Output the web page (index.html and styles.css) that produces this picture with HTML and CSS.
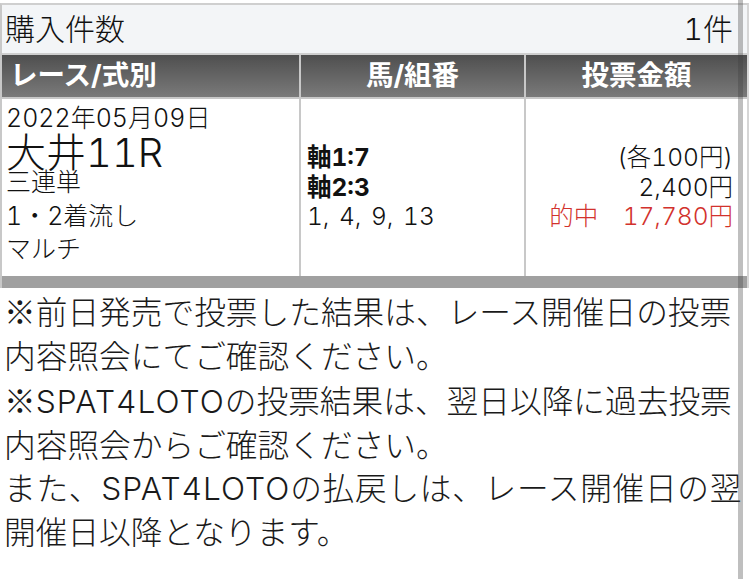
FILE: index.html
```html
<!DOCTYPE html>
<html lang="ja">
<head>
<meta charset="utf-8">
<link rel="stylesheet" href="styles.css">
</head>
<body>
<div class="summary">
  <div class="count-row">
    <span>購入件数</span>
    <span>1件</span>
  </div>
  <div class="grid">
    <div class="th th-left">レース/式別</div>
    <div class="th">馬/組番</div>
    <div class="th">投票金額</div>
    <div class="td race">
      <div class="date">2022年05月09日</div>
      <div class="name">大井11R</div>
      <div class="line first">三連単</div>
      <div class="line second">1・2着流し</div>
      <div class="line">マルチ</div>
    </div>
    <div class="td horses">
      <div class="b">軸1:7</div>
      <div class="b">軸2:3</div>
      <div class="nums">1, 4, 9, 13</div>
    </div>
    <div class="td amount">
      <div>(各100円)</div>
      <div>2,400円</div>
      <div class="hit">的中　17,780円</div>
    </div>
  </div>
  <div class="band"></div>
</div>
<div class="notes">
  <p><span class="kome">※</span>前日発売で投票した結果は、レース開催日の投票<br>内容照会にてご確認ください。</p>
  <p><span class="kome">※</span><span class="latin">SPAT4LOTO</span>の投票結果は、翌日以降に過去投票<br>内容照会からご確認ください。</p>
  <p><span class="spread">また、<span class="latin">SPAT4LOTO</span>の払戻しは、レース開催日の翌</span><br>開催日以降となります。</p>
</div>
<div class="scrollbar"></div>
</body>
</html>
```

FILE: styles.css
```css
html, body {
  margin: 0;
  padding: 0;
  background: #fff;
}
body {
  width: 750px;
  height: 579px;
  overflow: hidden;
  position: relative;
  font-family: "Inter", "Noto Sans CJK JP", sans-serif;
  font-weight: 300;
  font-variant-numeric: tabular-nums;
  color: #111;
}
.summary {
  margin-top: 3px;
  width: 745px;
  border-top: 2px solid #cfcfcf;
  border-left: 2px solid #c8c8c8;
  border-right: 2px solid #d6d6d6;
}
.count-row {
  height: 48px;
  background: #f3f5f7;
  display: flex;
  justify-content: space-between;
  align-items: center;
  padding: 0 14px 0 3px;
  font-size: 30px;
  line-height: 1;
  border-bottom: 2px solid #cfcfcf;
}
.grid {
  display: grid;
  grid-template-columns: 297px 223px 1fr;
  grid-template-rows: 42px 177px;
  gap: 2px;
  background: #c8c8c8;
}
.th {
  background: linear-gradient(#4f4f4f, #7a7a7a);
  color: #fff;
  font-weight: bold;
  font-size: 27.5px;
  display: flex;
  align-items: center;
  justify-content: center;
  line-height: 1;
}
.th-left {
  justify-content: flex-start;
  padding-left: 8px;
}
.td {
  background: #fff;
  font-size: 24.5px;
  line-height: 29.5px;
}
.race {
  padding: 4px 0 0 4px;
}
.race .date {
  font-size: 25px;
  line-height: 30px;
}
.race .name {
  margin-top: 5px;
  font-size: 40px;
  line-height: 30px;
}
.race .line {
  font-size: 25px;
  line-height: 33px;
}
.race .line.first {
  line-height: 28px;
}
.race .line.second {
  margin-top: 3.5px;
}
.horses {
  display: flex;
  flex-direction: column;
  justify-content: center;
  padding-left: 6px;
}
.b {
  font-weight: bold;
}
.nums {
  word-spacing: 3px;
}
.amount {
  display: flex;
  flex-direction: column;
  justify-content: center;
  align-items: flex-end;
  padding-right: 14px;
}
.hit {
  color: #d2322d;
}
.band {
  height: 12px;
  background: #a0a0a0;
}
.notes {
  padding: 1px 0 0 4px;
  font-size: 31.7px;
  line-height: 43.5px;
  color: #1a1a1a;
  white-space: nowrap;
}
.notes p {
  margin: 0;
}
.kome {
  font-family: "Noto Sans CJK JP", sans-serif;
}
.latin {
  letter-spacing: 1px;
}
.spread {
  letter-spacing: 0.7px;
}
.scrollbar {
  position: absolute;
  left: 738px;
  top: 0;
  width: 5px;
  height: 579px;
  background: rgba(60, 60, 60, 0.33);
}
```
